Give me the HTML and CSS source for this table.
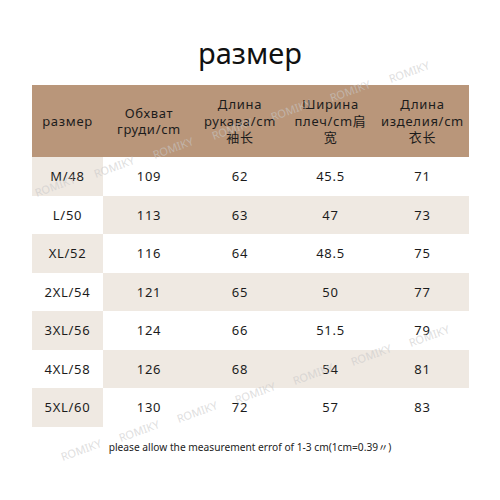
FILE: index.html
```html
<!DOCTYPE html>
<html lang="ru">
  <head>
    <meta charset="UTF-8" />
    <meta name="viewport" content="width=device-width, initial-scale=1.0" />
    <title>размер</title>
    <link rel="stylesheet" href="styles.css">
  </head>
  <body>
    <!-- 전체 박스 -->
    <div class="page">
      <h1 class="title">размер</h1>

      <!-- 사이즈표 -->
      <table class="size">
        <colgroup>
          <col class="c-size" />
          <col class="c-chest" />
          <col class="c-sleeve" />
          <col class="c-shoulder" />
          <col class="c-length" />
        </colgroup>
        <thead>
          <tr>
            <th>размер</th>
            <th>Обхват<br />груди/cm</th>
            <th>Длина<br />рукава/cm<br />袖长</th>
            <th>Ширина<br />плеч/cm肩<br />宽</th>
            <th>Длина<br />изделия/cm<br />衣长</th>
          </tr>
        </thead>
        <tbody>
          <tr><td>M/48</td><td>109</td><td>62</td><td>45.5</td><td>71</td></tr>
          <tr><td>L/50</td><td>113</td><td>63</td><td>47</td><td>73</td></tr>
          <tr><td>XL/52</td><td>116</td><td>64</td><td>48.5</td><td>75</td></tr>
          <tr><td>2XL/54</td><td>121</td><td>65</td><td>50</td><td>77</td></tr>
          <tr><td>3XL/56</td><td>124</td><td>66</td><td>51.5</td><td>79</td></tr>
          <tr><td>4XL/58</td><td>126</td><td>68</td><td>54</td><td>81</td></tr>
          <tr><td>5XL/60</td><td>130</td><td>72</td><td>57</td><td>83</td></tr>
        </tbody>
      </table>

      <p class="note">please allow the measurement errof of 1-3 cm(1cm=0.39〃)</p>

      <!-- 워터마크 -->
      <div class="marks">
        <span class="mark" style="left:388px;top:65px">ROMIKY</span>
        <span class="mark" style="left:329px;top:84px">ROMIKY</span>
        <span class="mark" style="left:270px;top:103px">ROMIKY</span>
        <span class="mark" style="left:211px;top:122px">ROMIKY</span>
        <span class="mark" style="left:152px;top:141px">ROMIKY</span>
        <span class="mark" style="left:93px;top:160px">ROMIKY</span>
        <span class="mark" style="left:34px;top:179px">ROMIKY</span>

        <span class="mark" style="left:408px;top:329px">ROMIKY</span>
        <span class="mark" style="left:350px;top:348px">ROMIKY</span>
        <span class="mark" style="left:292px;top:367px">ROMIKY</span>
        <span class="mark" style="left:234px;top:386px">ROMIKY</span>
        <span class="mark" style="left:176px;top:405px">ROMIKY</span>
        <span class="mark" style="left:118px;top:424px">ROMIKY</span>
        <span class="mark" style="left:60px;top:443px">ROMIKY</span>
      </div>
    </div>
  </body>
</html>
```

FILE: styles.css
```css
html,
body {
  margin: 0;
  padding: 0;
  background: #fff;
}

/* 전체박스 */
.page {
  position: relative;
  width: 500px;
  height: 500px;
  overflow: hidden;
  font-family: "Noto Sans", "Noto Sans CJK SC", sans-serif;
  color: #1c1c1c;
}

/* 제목 */
.title {
  margin: 0;
  padding-top: 33px;
  height: 40px;
  margin-bottom: 12px;
  font-size: 29px;
  line-height: 40px;
  font-weight: 400;
  text-align: center;
  color: #111;
}

/* 사이즈표 */
.size {
  margin: 0 31px 0 32px;
  width: 437px;
  border-collapse: collapse;
  table-layout: fixed;
}
.c-size { width: 71px; }
.c-chest { width: 92px; }
.c-sleeve { width: 90px; }
.c-shoulder { width: 91px; }
.c-length { width: 93px; }

.size th {
  height: 72px;
  padding: 0;
  background: #b9967a;
  font-size: 13px;
  line-height: 16.5px;
  font-weight: 400;
  letter-spacing: 0.7px;
  text-align: center;
  vertical-align: middle;
  white-space: nowrap;
}
.size td {
  height: 38.5px;
  padding: 0;
  font-size: 13px;
  letter-spacing: 0.7px;
  text-align: center;
  vertical-align: middle;
}

/* 체크무늬 배경 */
.size tbody tr:nth-child(odd) td:first-child,
.size tbody tr:nth-child(even) td:not(:first-child) {
  background: #efe9e2;
}

/* 하단 안내 */
.note {
  margin: 13px 0 0;
  font-size: 10.2px;
  line-height: 14px;
  text-align: center;
  color: #222;
}

/* 워터마크 */
.marks {
  position: absolute;
  inset: 0;
  pointer-events: none;
}
.mark {
  position: absolute;
  font-size: 11px;
  line-height: 14px;
  color: rgba(200, 200, 200, 0.6);
  transform: rotate(-20deg);
  transform-origin: center;
}
```
